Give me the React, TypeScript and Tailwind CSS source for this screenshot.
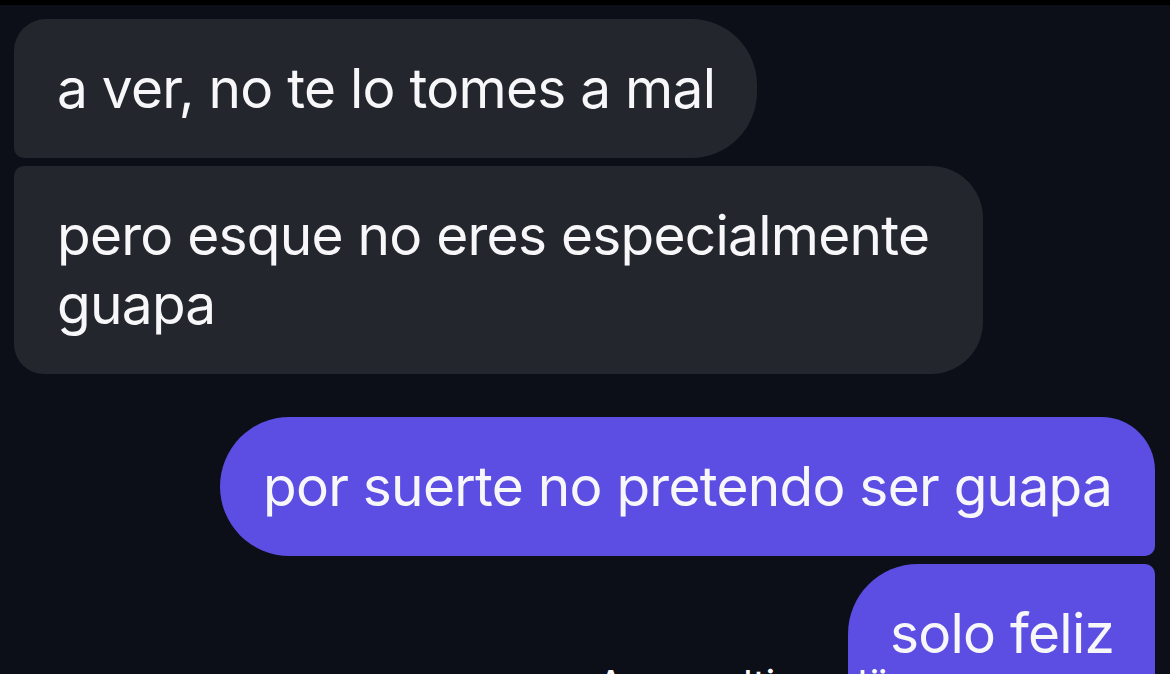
import React from "react";

export default function App() {
  const font = { fontFamily: "Inter, 'Noto Sans', 'Liberation Sans', sans-serif" };
  return (
    <div
      className="relative w-[1170px] h-[674px] overflow-hidden bg-[#0d0f18] flex flex-col text-[#f7f7f9]"
      style={font}
    >
      <div className="h-[5px] shrink-0 bg-black" />
      <div className="flex flex-col pt-[14px]">
        <div className="self-start ml-[14px] w-[743px] bg-[#24262d] rounded-tl-[32px] rounded-bl-[10px] rounded-r-[66px] pl-[43px] py-[35px] text-[55px] leading-[69px] tracking-[-0.75px] whitespace-nowrap">
          a ver, no te lo tomes a mal
        </div>
        <div className="self-start ml-[14px] mt-[8px] w-[969px] bg-[#24262d] rounded-tl-[10px] rounded-bl-[30px] rounded-r-[52px] pl-[43px] pr-[30px] py-[35px] text-[55px] leading-[69px] tracking-[-0.75px]">
          pero esque no eres especialmente guapa
        </div>
        <div className="self-end mr-[15px] mt-[43px] w-[935px] bg-[#5c4ee2] rounded-l-[70px] rounded-tr-[54px] rounded-br-[10px] pl-[43px] pr-[30px] py-[35px] text-[55px] leading-[69px] tracking-[-0.75px] whitespace-nowrap">
          por suerte no pretendo ser guapa
        </div>
        <div className="self-end mr-[15px] mt-[8px] w-[307px] h-[140px] bg-[#5c4ee2] rounded-tl-[70px] rounded-tr-[10px] pl-[42px] pt-[35px] text-[55px] leading-[69px] tracking-[-0.75px] whitespace-nowrap">
          solo feliz
        </div>
      </div>
      <div className="absolute left-[597px] top-[661px] text-[40px] leading-[48px] text-white whitespace-nowrap tracking-[-0.5px]">
        Ao quedtime dü
      </div>
    </div>
  );
}
